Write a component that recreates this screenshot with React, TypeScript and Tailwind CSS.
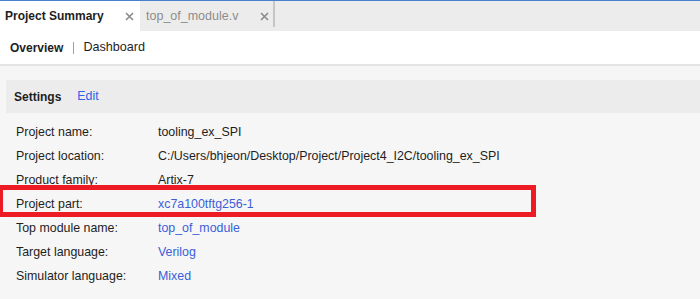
const rows: { label: string; value: string; link?: boolean; mark?: boolean }[] = [
    { label: "Project name:", value: "tooling_ex_SPI" },
    { label: "Project location:", value: "C:/Users/bhjeon/Desktop/Project/Project4_I2C/tooling_ex_SPI" },
    { label: "Product family:", value: "Artix-7" },
    { label: "Project part:", value: "xc7a100tftg256-1", link: true, mark: true },
    { label: "Top module name:", value: "top_of_module", link: true },
    { label: "Target language:", value: "Verilog", link: true },
    { label: "Simulator language:", value: "Mixed", link: true },
];

function Close() {
    return (
        <svg width="9" height="9" viewBox="0 0 9 9" className="shrink-0">
            <path d="M1 1 L8 8 M8 1 L1 8" stroke="#8a8a8a" strokeWidth="1.6" />
        </svg>
    );
}

export default function App() {
    return (
        <div className="w-[700px] h-[299px] overflow-hidden bg-[#f6f6f6] text-[12px] text-[#1e1e1e] font-['Liberation_Sans',Arial,sans-serif] flex flex-col">
            {/* tabs */}
            <div className="h-[31px] border-t border-[#4a7fd0] bg-[#ececec] flex items-stretch shrink-0">
                <div className="w-[140px] bg-white flex items-center pl-[5px] pr-[6px] justify-between">
                    <span className="font-bold">Project Summary</span>
                    <Close />
                </div>
                <div className="w-[133px] flex items-center pl-[6px] pr-[4px] justify-between">
                    <span className="text-[#8c8c8c] text-[12.5px]">top_of_module.v</span>
                    <Close />
                </div>
                <div className="w-[2px] bg-[#c6c6c6] mb-[4px]"></div>
            </div>

            {/* sub nav */}
            <div className="h-[35px] bg-white flex items-center pl-[10px] border-b-2 border-[#e4e4e4] shrink-0">
                <span className="font-bold">Overview</span>
                <span className="w-px h-[12px] bg-[#a0a0a0] ml-[10px] mr-[9px]"></span>
                <span className="text-[12.6px]">Dashboard</span>
            </div>

            <div className="pl-[6px] pt-[14px] flex flex-col text-[12.4px]">
                <div className="h-[33px] bg-[#ececec] flex items-center pl-[8px] gap-[16px]">
                    <span className="font-bold text-[12px]">Settings</span>
                    <span className="text-[#2f63e6]">Edit</span>
                </div>
                <div className="flex flex-col pt-[7px] -ml-[6px]">
                    {rows.map((r) =>
                        r.mark ? (
                            <div
                                key={r.label}
                                className="w-[536px] h-[32px] -mt-[7px] -mb-[1px] border-[5px] border-l-[3px] border-[#ed1c24] flex items-center pt-[6px] pl-[13px]"
                            >
                                <span className="w-[142px] shrink-0">{r.label}</span>
                                <span className="text-[#3a5fd9]">{r.value}</span>
                            </div>
                        ) : (
                            <div key={r.label} className="h-[24px] flex items-center pl-[16px]">
                                <span className="w-[142px] shrink-0">{r.label}</span>
                                <span className={r.link ? "text-[#3a5fd9]" : ""}>{r.value}</span>
                            </div>
                        )
                    )}
                </div>
            </div>
        </div>
    );
}
